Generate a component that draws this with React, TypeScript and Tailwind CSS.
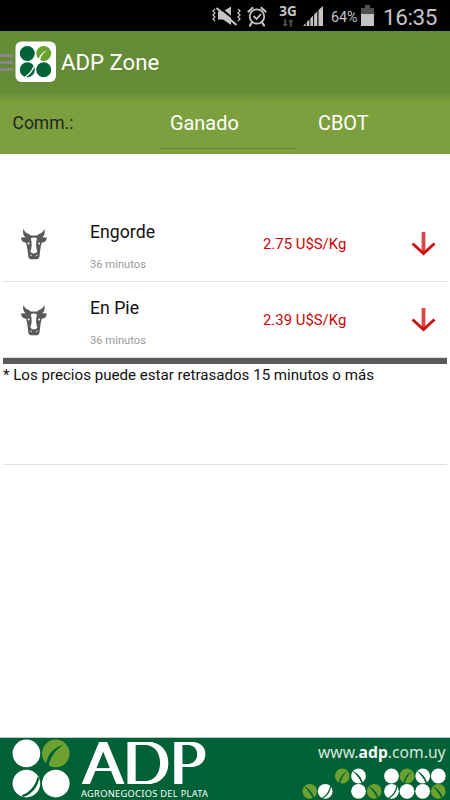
type Quote = {
  name: string;
  age: string;
  price: string;
};

const quotes: Quote[] = [
  { name: "Engorde", age: "36 minutos", price: "2.75 U$S/Kg" },
  { name: "En Pie", age: "36 minutos", price: "2.39 U$S/Kg" }
];

type Seed = {
  x: number;
  y: number;
  fill: string;
  vein?: "up" | "down" | "back";
};

const seeds: Seed[] = [
  { x: 40.3, y: 8, fill: "#6ca12f", vein: "up" },
  { x: 56.5, y: 8, fill: "#fff", vein: "back" },
  { x: 89.5, y: 8, fill: "#fff" },
  { x: 105, y: 8, fill: "#6ca12f", vein: "up" },
  { x: 120.7, y: 8, fill: "#fff", vein: "back" },
  { x: 136.3, y: 8, fill: "#fff" },
  { x: 7.7, y: 23.3, fill: "#6ca12f", vein: "back" },
  { x: 23.2, y: 23.3, fill: "#fff", vein: "down" },
  { x: 56.5, y: 23.3, fill: "#fff" },
  { x: 72.2, y: 23.3, fill: "#6ca12f", vein: "back" },
  { x: 89.5, y: 23.3, fill: "#fff", vein: "down" },
  { x: 105, y: 23.3, fill: "#fff" },
  { x: 120.7, y: 23.3, fill: "#fff" },
  { x: 136.3, y: 23.3, fill: "#6ca12f", vein: "back" }
];

const veins = {
  up: "M-3.5 7.5C-3 2 0-2 5-5C1-1-1.5 3-2.2 8Z",
  down: "M-3.5 6.7C1 4 4 0 5-5.5L6-4.5C5 1 2 5-2.5 7.5Z",
  back: "M-6-5C-1-3 3 1 4.3 6.5L3.2 7.5C1 2-2-1-6-5Z"
};

function StatusBar() {
  return (
    <div className="flex h-[31px] shrink-0 items-center bg-black pl-[212px] text-[#c4c4c4]">
      <svg width="29" height="22" viewBox="0 0 29 22" className="mt-px" fill="none" stroke="currentColor">
        <path d="M6 6.5h5l8-5v18.5L11 14.5H6Z" fill="currentColor" stroke="none" />
        <path d="M5.5 1 25.5 17" stroke="#000" strokeWidth="2" />
        <path d="M4.5 3 24.5 20" strokeWidth="2.2" />
        <path d="m3 4-2 2 2 2-2 2 2 2-2 2 2 2M26 4l2 2-2 2 2 2-2 2 2 2-2 2" strokeWidth="1.2" />
      </svg>
      <svg width="20" height="21" viewBox="0 0 20 21" className="ml-1.5 mt-px" fill="none" stroke="currentColor">
        <circle cx="10" cy="10.5" r="7.2" strokeWidth="1.8" />
        <path d="M1.5 5.5 5.5 2M18.5 5.5 14.5 2M4.5 17 3 19.5M15.5 17l1.5 2.5" strokeWidth="2.2" strokeLinecap="round" />
        <path d="m6.5 10 3 3 4.5-5" strokeWidth="1.8" />
      </svg>
      <div className="ml-[11px] flex w-[20px] flex-col items-center">
        <span className="font-['Open_Sans',sans-serif] text-[13.5px] font-bold leading-[13px]">3G</span>
        <svg width="12" height="8" viewBox="0 0 12 8" className="mt-px" fill="#4c4c4c">
          <path d="M2.2 0h2v5H6L3.2 8 .5 5h1.7ZM7.8 8h2V3h1.7L8.8 0 6 3h1.8Z" />
        </svg>
      </div>
      <svg width="20" height="20" viewBox="0 0 20 20" className="ml-[5px]" fill="currentColor">
        <path d="M0 20 2.7 17.3V20ZM3.7 16.3l2.7-2.7V20H3.7ZM7.4 12.6l2.7-3V20H7.4ZM11.1 8.7l3.2-3.5V20h-3.2ZM15.5 4 20 0v20h-4.5Z" />
      </svg>
      <span className="ml-2 mt-1 w-[30px] text-[14.3px]">64%</span>
      <svg width="13" height="21" viewBox="0 0 13 21">
        <path d="M4 0h5v3h4v6H0V3h4Z" fill="#505050" />
        <path d="M0 9h13v12H0Z" fill="#c4c4c4" />
      </svg>
      <span className="ml-[9px] mt-[3px] text-[22.5px] leading-none tracking-[-0.4px]">16:35</span>
    </div>
  );
}

function AppIcon() {
  return (
    <svg width="42" height="42" viewBox="0 0 42 42" className="shrink-0">
      <rect x=".5" y=".5" width="40.5" height="40.5" rx="6" fill="#fff" />
      <circle cx="12.3" cy="12.5" r="7.5" fill="#006338" />
      <circle cx="28.7" cy="12.5" r="7.5" fill="#69a22d" />
      <circle cx="12.3" cy="28.7" r="7.5" fill="#006338" />
      <circle cx="28.7" cy="28.7" r="7.5" fill="#006338" />
      <path d="M23.3 18.7C24.5 14 28 10.5 32.5 9C28.5 11.5 26 14.5 25 19.5Z" fill="#fff" />
      <path d="M9.5 35.4C13.5 33.5 16.5 30 18.3 25L19.2 26.3C17.5 31 14.5 34.5 10.7 36.3Z" fill="#fff" />
    </svg>
  );
}

function CowIcon() {
  return (
    <svg width="28" height="32" viewBox="0 0 28 32">
      <path
        d="M3.6 1C2.4 4.5 3.2 7.6 5.6 9.2L1 9.5C1 12.7 3 14.3 6 14.7L7 18.5L7.6 22.5L8.4 29Q9 31.3 11 31.3H16.8Q18.8 31.3 19.4 29L20.2 22.5L20.8 18.5L21.8 14.7C24.8 14.3 26.8 12.7 26.8 9.5L22.2 9.2C24.6 7.6 25.4 4.5 24.2 1C23.2 4 21.2 5.5 18.4 6.2L17.4 7.4H10.4L9.4 6.2C6.6 5.5 4.6 4 3.6 1Z"
        fill="#59595b"
      />
      <path d="M10.9 10.2C12.4 9.3 15.4 9.3 16.9 10.2C15.8 15.5 15.8 19 17.3 23.5Q16.4 25.6 13.9 25.6T10.4 23.5C12 19 12 15.5 10.9 10.2Z" fill="#fff" />
      <circle cx="8.6" cy="15.5" r="1" fill="#fff" />
      <circle cx="19.2" cy="15.5" r="1" fill="#fff" />
      <path d="m10.4 26.8 1.5 1M17.4 26.8l-1.5 1" stroke="#fff" strokeWidth=".9" />
    </svg>
  );
}

function QuoteRow({ name, age, price }: Quote) {
  return (
    <div className="flex h-[76px] items-center border-b border-[#e0e0e0]">
      <div className="w-[87px] pl-[17px]">
        <CowIcon />
      </div>
      <div className="w-[173px] pt-1.5">
        <div className="text-[17.7px] leading-6 text-[#111]">{name}</div>
        <div className="mt-[13px] text-[11.2px] leading-4 text-[#9a9a9a]">{age}</div>
      </div>
      <div className="w-[148px] pt-px text-[14.9px] leading-5 text-[#c80505]">{price}</div>
      <svg width="25" height="26" viewBox="0 0 25 26" fill="none" stroke="#cc1111" strokeWidth="3">
        <path d="M12.5 1v21" stroke="#db4444" strokeWidth="3.8" />
        <path d="M1.5 12.5 12.5 22.5 23.5 12.5" />
      </svg>
    </div>
  );
}

function Footer() {
  return (
    <footer className="flex h-[63px] shrink-0 border-t border-[#c6cac6] bg-[#006137] font-['Noto_Sans',sans-serif] text-white">
      <svg width="81" height="62" viewBox="0 0 81 62" fill="#fff" className="shrink-0">
        <circle cx="26.4" cy="15.4" r="13.8" />
        <circle cx="55.8" cy="15.4" r="13.8" fill="#6ca12f" />
        <circle cx="26.4" cy="45.6" r="13.8" />
        <circle cx="55.8" cy="45.6" r="13.8" />
        <path d="M45.8 26C48 16 54 9 64 6.5C56 11.5 50.5 18 48.7 27.5Z" fill="#006137" />
        <path d="M21.5 57.5C30 54 35.5 48 37.5 38.5L39.2 41C37 50 32 56 23.5 59Z" fill="#006137" />
      </svg>
      <div className="w-[221px] shrink-0">
        <div className="h-[49px] whitespace-nowrap font-['Lato',sans-serif] text-[60px] font-light leading-[46px] tracking-[1px] [text-shadow:1px_0_#fff,2px_0_#fff,3px_0_#fff,4px_0_#fff,5px_0_#fff]">
          ADP
        </div>
        <div className="whitespace-nowrap text-[9.3px] leading-[14px] tracking-[0.28px]">AGRONEGOCIOS DEL PLATA</div>
      </div>
      <div className="w-[148px] shrink-0">
        <div className="ml-4 mt-[3px] whitespace-nowrap text-[15.7px] leading-[22px] text-[#d9e8df]">
          www.<b className="text-white">adp</b>.com.uy
        </div>
        <svg width="148" height="32" viewBox="0 0 148 32" className="mt-[5px]">
          {seeds.map(({ x, y, fill, vein }) => (
            <g key={`${x}-${y}`} transform={`translate(${x} ${y})`}>
              <circle r="7.4" fill={fill} />
              {vein && <path d={veins[vein]} fill="#006137" />}
            </g>
          ))}
        </svg>
      </div>
    </footer>
  );
}

export default function App() {
  return (
    <div className="flex h-screen w-full flex-col overflow-hidden bg-white font-['Roboto',sans-serif]">
      <StatusBar />

      <header className="flex h-[62px] shrink-0 items-center bg-[#648b36]">
        <div className="flex w-[15px] flex-col gap-1">
          <div className="h-[3px] w-[13px] bg-[#8a8589]" />
          <div className="h-[3px] w-[13px] bg-[#8a8589]" />
          <div className="h-[3px] w-[13px] bg-[#8a8589]" />
        </div>
        <AppIcon />
        <h1 className="ml-1 mt-0.5 text-[22.2px] text-white">ADP Zone</h1>
      </header>

      <div className="flex h-[61px] shrink-0 bg-linear-to-b from-[#688d36] to-[#7da03e] to-[10px] text-white">
        <div className="w-[160px] pl-[12.5px] pt-4 text-[17.5px] leading-7 text-[#252525]">Comm.:</div>
        <div className="mb-[5px] w-[137px] border-b border-[#66843f] pl-2.5 pt-[17px] text-[19.9px] leading-7">Ganado</div>
        <div className="mb-[5px] ml-[11px] flex-1 border-b border-[#759a3d] pl-2.5 pt-[17px] text-[19.9px] leading-7">CBOT</div>
      </div>

      <main className="mx-[3px] flex-1 pt-[52px]">
        {quotes.map((quote) => (
          <QuoteRow key={quote.name} {...quote} />
        ))}
        <div className="h-1.5 bg-[#59595b]" />
        <div className="h-[101px] border-b border-[#e0e0e0] text-[15.1px] leading-[23px] text-[#111]">
          * Los precios puede estar retrasados 15 minutos o más
        </div>
      </main>

      <Footer />
    </div>
  );
}
